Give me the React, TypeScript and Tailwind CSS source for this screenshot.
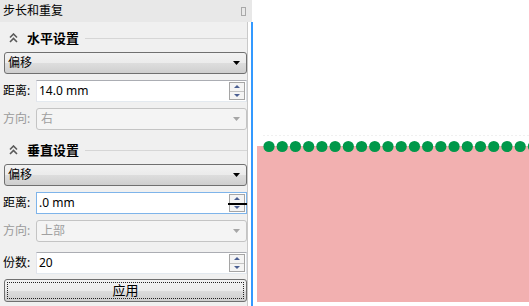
import React from 'react';

const FONT = "font-['Noto_Sans','Noto_Sans_CJK_SC',sans-serif]";

function ChevronsUp() {
  return (
    <svg width="9" height="10" viewBox="0 0 9 10">
      <path d="M1 4.5 L4.5 1 L8 4.5" fill="none" stroke="#5a5a5a" strokeWidth="1.6" />
      <path d="M1 9 L4.5 5.5 L8 9" fill="none" stroke="#5a5a5a" strokeWidth="1.6" />
    </svg>
  );
}

function SectionHeader({ title, className = '' }: { title: string; className?: string }) {
  return (
    <div className={`flex h-[18px] items-center ${className}`}>
      <div className="flex w-[24px] justify-start pl-[6px]">
        <ChevronsUp />
      </div>
      <span className="text-[13px] font-bold leading-none text-black">{title}</span>
      <div className="ml-[6px] h-px flex-1 bg-[#d6d6d6]" />
    </div>
  );
}

function Dropdown({ value, className = '' }: { value: string; className?: string }) {
  return (
    <div
      className={`ml-[1px] flex h-[22px] items-center rounded-[3px] border border-[#707070] bg-[linear-gradient(to_bottom,#f2f2f2_0%,#ebebeb_50%,#dddddd_51%,#cfcfcf_100%)] pl-[3px] pr-[6px] ${className}`}
    >
      <span className="flex-1 text-[12px] leading-none text-black">{value}</span>
      <svg width="7" height="4" viewBox="0 0 7 4">
        <path d="M0 0 H7 L3.5 4 Z" fill="#000" />
      </svg>
    </div>
  );
}

function Spinner({ cursor = false }: { cursor?: boolean }) {
  return (
    <div className="relative mr-[1px] flex h-[18px] w-[16px] flex-col border border-[#a5a5a5] bg-[#f4f4f4]">
      <div className="flex flex-1 items-center justify-center border-b border-[#c4c4c4]">
        <svg width="6" height="3" viewBox="0 0 6 3">
          <path d="M0 3 L3 0 L6 3 Z" fill="#4b5f92" />
        </svg>
      </div>
      <div className="flex flex-1 items-center justify-center">
        <svg width="6" height="3" viewBox="0 0 6 3">
          <path d="M0 0 H6 L3 3 Z" fill="#4b5f92" />
        </svg>
      </div>
      {cursor && <div className="absolute left-[-2px] right-[-3px] top-[8px] h-[2px] bg-black" />}
    </div>
  );
}

function SpinField({
  label,
  value,
  focused = false,
  cursor = false,
  className = '',
}: {
  label: string;
  value: string;
  focused?: boolean;
  cursor?: boolean;
  className?: string;
}) {
  return (
    <div className={`flex items-center ${className}`}>
      <span className="w-[33px] text-[12px] leading-none text-black">{label}</span>
      <div
        className={`flex h-[22px] flex-1 items-center border bg-white pl-[2px] ${
          focused ? 'border-[#7eb4ea]' : 'border-[#abadb3] border-l-[#e2e3ea] border-r-[#dbdfe6] border-b-[#e3e9ef]'
        }`}
      >
        <span className="flex-1 text-[12px] leading-none text-black">{value}</span>
        <Spinner cursor={cursor} />
      </div>
    </div>
  );
}

function DisabledCombo({ label, value, className = '' }: { label: string; value: string; className?: string }) {
  return (
    <div className={`flex items-center ${className}`}>
      <span className="w-[33px] text-[12px] leading-none text-[#9a9a9a]">{label}</span>
      <div className="flex h-[22px] flex-1 items-center rounded-[3px] border border-[#c4c4c4] bg-[#f4f4f4] pl-[4px] pr-[6px]">
        <span className="flex-1 text-[12px] leading-none text-[#a0a0a0]">{value}</span>
        <svg width="7" height="4" viewBox="0 0 7 4">
          <path d="M0 0 H7 L3.5 4 Z" fill="#a6a6a6" />
        </svg>
      </div>
    </div>
  );
}

function Canvas() {
  const dots = Array.from({ length: 21 }, (_, i) => 16 + i * 13.22);
  return (
    <svg width="276" height="306" viewBox="0 0 276 306">
      <rect x="0" y="0" width="276" height="306" fill="#ffffff" />
      <line x1="10" y1="135.5" x2="276" y2="135.5" stroke="#f0f0f0" strokeWidth="1" strokeDasharray="2 2" />
      <rect x="4" y="146" width="272" height="156" fill="#f2b0b0" />
      {dots.map((cx, i) => (
        <circle key={i} cx={cx} cy="146.5" r="5.6" fill="#00984a" />
      ))}
    </svg>
  );
}

export default function App() {
  return (
    <div className={`flex h-[306px] w-[529px] overflow-hidden bg-white ${FONT}`}>
      {/* dock panel */}
      <div className="flex w-[253px] flex-col">
        <div className="flex h-[22px] w-[252px] items-center bg-[#e8e8e8] pl-[3px] pr-[6px]">
          <span className="flex-1 text-[12px] leading-none text-black">步长和重复</span>
          <div className="h-[9px] w-[5px] border border-[#a8a8a8]" />
        </div>
        <div className="flex flex-1">
          <div className="flex w-[248px] flex-col border-r border-[#c9c9c9] bg-[#f0f0f0] pl-[3px]">
            <SectionHeader title="水平设置" className="mt-[7px]" />
            <Dropdown value="偏移" className="mt-[5px]" />
            <SpinField label="距离:" value="14.0 mm" className="mt-[6px]" />
            <DisabledCombo label="方向:" value="右" className="mt-[6px]" />

            <SectionHeader title="垂直设置" className="mt-[11px]" />
            <Dropdown value="偏移" className="mt-[5px]" />
            <SpinField label="距离:" value=".0 mm" focused cursor className="mt-[6px]" />
            <DisabledCombo label="方向:" value="上部" className="mt-[6px]" />
            <SpinField label="份数:" value="20" className="mt-[10px]" />

            <button className="relative ml-[1px] mt-[5px] flex h-[23px] items-center justify-center rounded-[3px] border border-[#707070] bg-[linear-gradient(to_bottom,#f2f2f2_0%,#ebebeb_50%,#dddddd_51%,#cfcfcf_100%)]">
              <div className="absolute inset-[2px] border border-dotted border-[#222]" />
              <span className="text-[13px] leading-none text-black">应用</span>
            </button>
          </div>
          <div className="w-[3px] bg-white" />
          <div className="w-[2px] bg-[#3399ff]" />
        </div>
      </div>

      {/* drawing canvas */}
      <div className="flex-1">
        <Canvas />
      </div>
    </div>
  );
}
